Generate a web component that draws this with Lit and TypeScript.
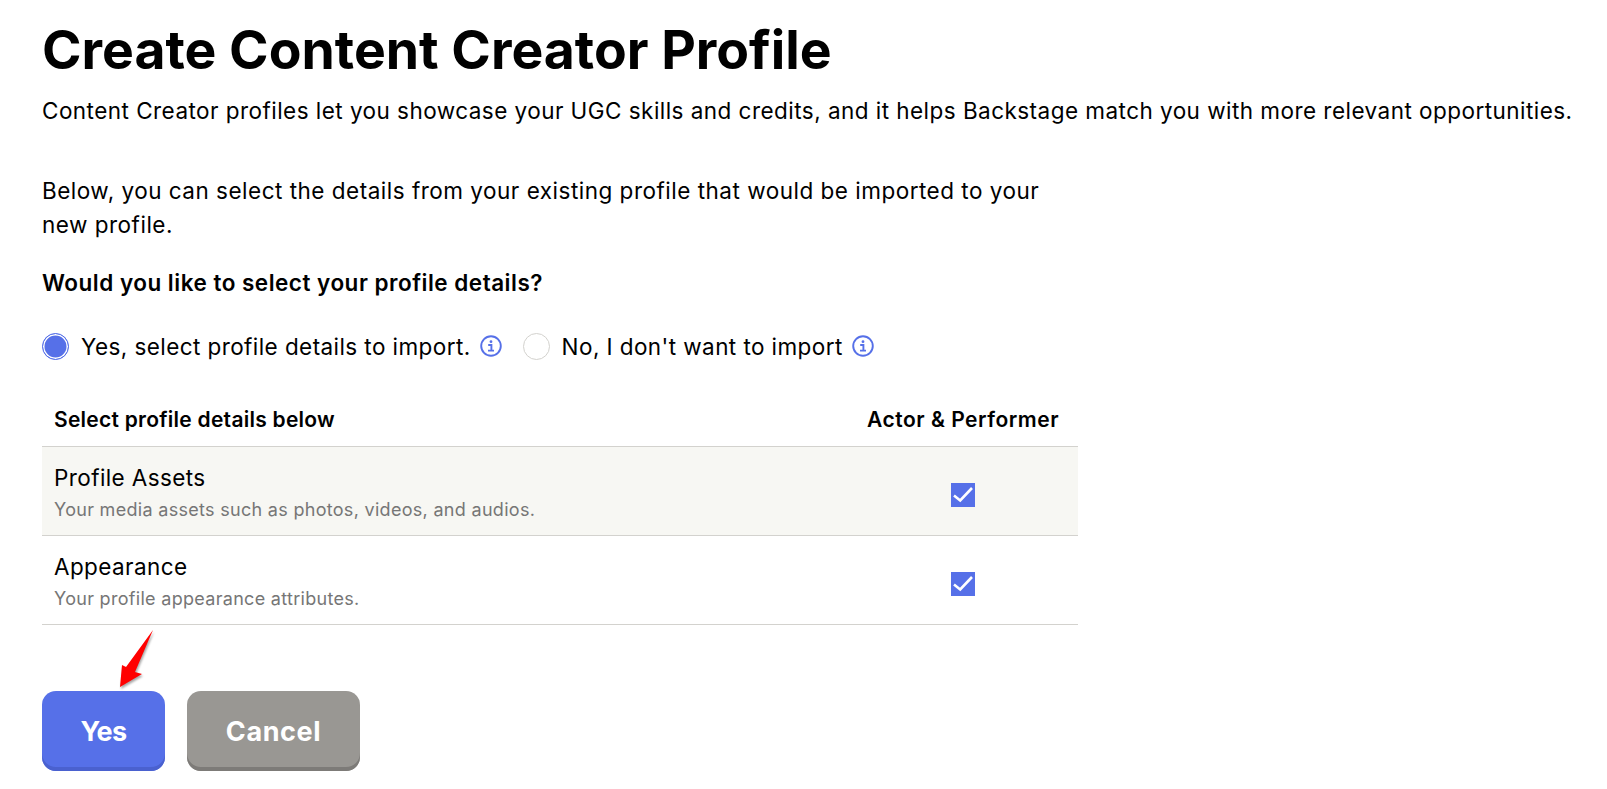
import { LitElement, html, css, svg } from 'lit'
import { customElement } from 'lit/decorators.js'

const infoIcon = html`<svg class="info" viewBox="0 0 22 22" width="22" height="22" fill="none">
    <circle cx="11" cy="11" r="9.8" stroke="#5670e8" stroke-width="1.9"></circle>
    <circle cx="11" cy="6.7" r="1.4" fill="#5670e8"></circle>
    <path d="M8.2 10h3.2v5.200M8 15.600h6" stroke="#5670e8" stroke-width="1.9"></path>
</svg>`

const check = svg`<path d="M3 12.500l6.200 4.900L21 5" fill="none" stroke="#fff" stroke-width="2.600"></path>`

const rows = [
    { title: 'Profile Assets', text: 'Your media assets such as photos, videos, and audios.', shaded: true },
    { title: 'Appearance', text: 'Your profile appearance attributes.', shaded: false },
]

@customElement('app-root')
export class AppRoot extends LitElement {
    static styles = css`
        :host {
            display: block;
            position: relative;
            height: 789px;
            overflow: hidden;
            background: #fff;
            color: #000;
            font-family: Inter, 'Liberation Sans', sans-serif;
        }

        .page {
            display: flex;
            flex-direction: column;
            align-items: flex-start;
            padding: 17px 0 0 42px;
        }

        h1 {
            margin: 0;
            font-size: 53.5px;
            line-height: 66px;
            font-weight: 700;
            white-space: nowrap;
        }

        .lead {
            margin: 13px 0 0;
            font-size: 22.5px;
            letter-spacing: 0.46px;
            line-height: 30px;
            white-space: nowrap;
        }

        .below {
            margin: 48px 0 0;
            width: 1020px;
            font-size: 22.5px;
            letter-spacing: 0.5px;
            line-height: 34px;
        }

        .ask {
            margin: 26px 0 0;
            font-size: 22.5px;
            letter-spacing: 0.5px;
            line-height: 30px;
            font-weight: 600;
        }

        .choices {
            display: flex;
            align-items: center;
            height: 28px;
            margin-top: 34px;
            font-size: 22.5px;
            letter-spacing: 0.42px;
        }

        .radio {
            box-sizing: border-box;
            width: 27px;
            height: 27px;
            border-radius: 50%;
            border: 1px solid #d3d2ce;
            background: #fff;
            margin-right: 12px;
        }

        .radio.on {
            border: 1px solid #5670e8;
            background: #5670e8;
            box-shadow: inset 0 0 0 1.5px #fff;
        }

        .info {
            margin: 0 21px 0 9px;
        }

        .table {
            width: 1036px;
            margin-top: 29px;
        }

        .head {
            display: flex;
            justify-content: space-between;
            align-items: center;
            box-sizing: border-box;
            height: 58px;
            padding: 3px 19px 0 12px;
            font-size: 21px;
            letter-spacing: 0.26px;
            font-weight: 600;
            border-bottom: 1px solid #d3d2ce;
        }

        .head .role {
            letter-spacing: 0.52px;
        }

        .row {
            display: flex;
            justify-content: space-between;
            align-items: center;
            box-sizing: border-box;
            height: 89px;
            padding: 4px 103px 0 12px;
            border-bottom: 1px solid #d3d2ce;
        }

        .row.shaded {
            background: #f7f7f3;
        }

        .name {
            font-size: 22.5px;
            letter-spacing: 0.4px;
            line-height: 30px;
        }

        .note {
            margin-top: 4px;
            font-size: 18px;
            letter-spacing: 0.3px;
            line-height: 26px;
            color: #767676;
        }

        .box {
            display: block;
            width: 24px;
            height: 24px;
            margin-top: 3px;
            background: #5670e8;
        }

        .actions {
            display: flex;
            gap: 22px;
            margin-top: 66px;
        }

        button {
            height: 80px;
            border: 0;
            border-radius: 14px;
            color: #fff;
            font: 700 27px Inter, 'Liberation Sans', sans-serif;
            padding: 0;
        }

        .yes {
            width: 123px;
            letter-spacing: -0.6px;
            background: #5670e8;
            box-shadow: inset 0 -4px 0 #4a61cf;
        }

        .cancel {
            width: 173px;
            letter-spacing: 0.6px;
            background: #999793;
            box-shadow: inset 0 -4px 0 #7d7b78;
        }

        .arrow {
            position: absolute;
            left: 116px;
            top: 628px;
            filter: drop-shadow(1px 2px 1px rgba(0, 0, 0, 0.35));
        }
    `

    render() {
        return html`
            <div class="page">
                <h1>Create Content Creator Profile</h1>
                <p class="lead">
                    Content Creator profiles let you showcase your UGC skills and credits, and it helps Backstage match
                    you with more relevant opportunities.
                </p>
                <p class="below">
                    Below, you can select the details from your existing profile that would be imported to your new
                    profile.
                </p>
                <p class="ask">Would you like to select your profile details?</p>
                <div class="choices">
                    <span class="radio on"></span>
                    Yes, select profile details to import.
                    ${infoIcon}
                    <span class="radio"></span>
                    No, I don't want to import
                    ${infoIcon}
                </div>
                <div class="table">
                    <div class="head">
                        <span>Select profile details below</span>
                        <span class="role">Actor &amp; Performer</span>
                    </div>
                    ${rows.map(
                        (r) => html`
                            <div class="row ${r.shaded ? 'shaded' : ''}">
                                <div>
                                    <div class="name">${r.title}</div>
                                    <div class="note">${r.text}</div>
                                </div>
                                <svg class="box" viewBox="0 0 24 24">${check}</svg>
                            </div>
                        `
                    )}
                </div>
                <div class="actions">
                    <button class="yes">Yes</button>
                    <button class="cancel">Cancel</button>
                </div>
            </div>
            <svg class="arrow" width="40" height="62" viewBox="0 0 40 62">
                <path d="M37 2 L19 44 L26 46 L4 59 L6 37 L10 39 Z" fill="#f00"></path>
            </svg>
        `
    }
}
